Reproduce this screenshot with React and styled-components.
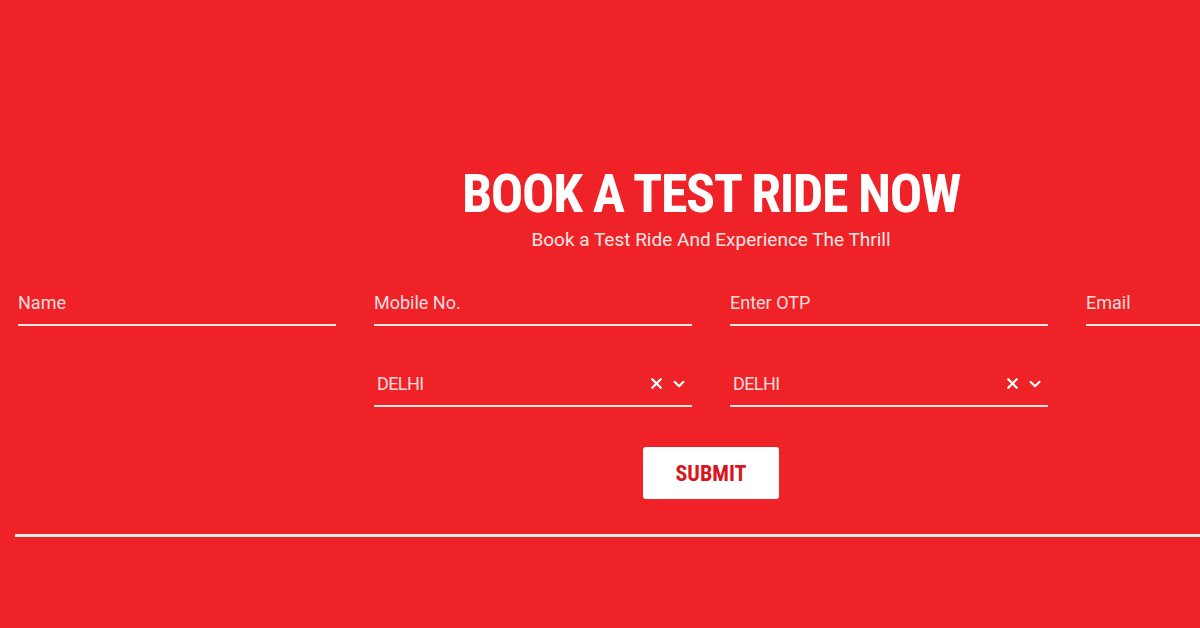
import React from 'react';
import styled, { createGlobalStyle } from 'styled-components';
import { X, ChevronDown } from 'lucide-react';

const GlobalStyle = createGlobalStyle`
  html, body {
    margin: 0;
    padding: 0;
    background: #ef2327;
    overflow: hidden;
  }
  body {
    font-family: Roboto, "Open Sans", sans-serif;
    color: #fff;
  }
`;

const Page = styled.div`
  width: 1200px;
  height: 628px;
  padding: 167px 0 0 18px;
  box-sizing: border-box;
  overflow: hidden;
`;

const Inner = styled.div`
  width: 1386px;
  display: flex;
  flex-direction: column;
  align-items: center;
`;

const Title = styled.h2`
  margin: 0;
  font-size: 54px;
  font-weight: 700;
  font-stretch: 75%;
  line-height: 54px;
  letter-spacing: -1.4px;
`;

const Subtitle = styled.p`
  margin: 9px 0 0;
  font-size: 19px;
  line-height: 19px;
  font-weight: 400;
  color: #fde6e6;
`;

const FormGrid = styled.div`
  width: 100%;
  margin-top: 44px;
  display: grid;
  grid-template-columns: repeat(4, 318px);
  column-gap: 38px;
  row-gap: 48px;
`;

const Field = styled.label`
  grid-column: ${(p) => p.$col || 'auto'};
  display: flex;
  align-items: center;
  padding-bottom: 12px;
  border-bottom: 2px solid #fbe4e4;
`;

const Placeholder = styled.span`
  flex: 1;
  font-size: 18px;
  line-height: 19px;
  color: #fcdcdc;
  padding-left: ${(p) => (p.$select ? '3px' : '0')};
  letter-spacing: ${(p) => (p.$select ? '-0.6px' : '0')};
`;

const Icons = styled.span`
  display: flex;
  align-items: center;
  gap: 5px;
  padding-right: 4px;
  height: 19px;
  color: #fff;
`;

const SubmitButton = styled.button`
  margin-top: 40px;
  width: 136px;
  height: 52px;
  border: none;
  border-radius: 3px;
  background: #fff;
  color: #d9161d;
  font-family: Roboto, "Open Sans", sans-serif;
  font-stretch: 75%;
  font-weight: 700;
  font-size: 22px;
  cursor: pointer;
`;

const Divider = styled.div`
  align-self: flex-start;
  margin: 35px 0 0 -3px;
  width: 1400px;
  height: 3px;
  background: #fbeaea;
`;

const SelectField = ({ col, value }) => (
  <Field $col={col}>
    <Placeholder $select>{value}</Placeholder>
    <Icons>
      <X size={17} strokeWidth={3.2} />
      <ChevronDown size={18} strokeWidth={2.8} />
    </Icons>
  </Field>
);

export default function App() {
  return (
    <>
      <GlobalStyle />
      <Page>
        <Inner>
          <Title>BOOK A TEST RIDE NOW</Title>
          <Subtitle>Book a Test Ride And Experience The Thrill</Subtitle>
          <FormGrid>
            <Field><Placeholder>Name</Placeholder></Field>
            <Field><Placeholder>Mobile No.</Placeholder></Field>
            <Field><Placeholder>Enter OTP</Placeholder></Field>
            <Field><Placeholder>Email</Placeholder></Field>
            <SelectField col="2" value="DELHI" />
            <SelectField col="3" value="DELHI" />
          </FormGrid>
          <SubmitButton>SUBMIT</SubmitButton>
          <Divider />
        </Inner>
      </Page>
    </>
  );
}
